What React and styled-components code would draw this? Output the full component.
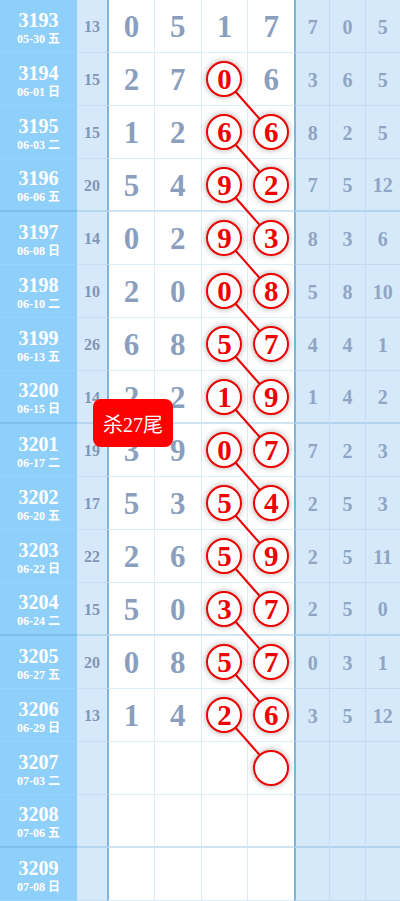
import React from 'react';
import styled, { createGlobalStyle } from 'styled-components';

const ROW_H = 53;
const COL3_X = 224.4;
const COL4_X = 271.1;

// issue, date, sum, four digits, circled index pair, three trailing stats
const ROWS = [
    { no: '3193', date: '05-30 五', sum: 13, digits: [0, 5, 1, 7], stats: [7, 0, 5] },
    { no: '3194', date: '06-01 日', sum: 15, digits: [2, 7, 0, 6], hit: [2], stats: [3, 6, 5] },
    { no: '3195', date: '06-03 二', sum: 15, digits: [1, 2, 6, 6], hit: [2, 3], stats: [8, 2, 5] },
    { no: '3196', date: '06-06 五', sum: 20, digits: [5, 4, 9, 2], hit: [2, 3], stats: [7, 5, 12] },
    { no: '3197', date: '06-08 日', sum: 14, digits: [0, 2, 9, 3], hit: [2, 3], stats: [8, 3, 6] },
    { no: '3198', date: '06-10 二', sum: 10, digits: [2, 0, 0, 8], hit: [2, 3], stats: [5, 8, 10] },
    { no: '3199', date: '06-13 五', sum: 26, digits: [6, 8, 5, 7], hit: [2, 3], stats: [4, 4, 1] },
    { no: '3200', date: '06-15 日', sum: 14, digits: [2, 2, 1, 9], hit: [2, 3], stats: [1, 4, 2] },
    { no: '3201', date: '06-17 二', sum: 19, digits: [3, 9, 0, 7], hit: [2, 3], stats: [7, 2, 3] },
    { no: '3202', date: '06-20 五', sum: 17, digits: [5, 3, 5, 4], hit: [2, 3], stats: [2, 5, 3] },
    { no: '3203', date: '06-22 日', sum: 22, digits: [2, 6, 5, 9], hit: [2, 3], stats: [2, 5, 11] },
    { no: '3204', date: '06-24 二', sum: 15, digits: [5, 0, 3, 7], hit: [2, 3], stats: [2, 5, 0] },
    { no: '3205', date: '06-27 五', sum: 20, digits: [0, 8, 5, 7], hit: [2, 3], stats: [0, 3, 1] },
    { no: '3206', date: '06-29 日', sum: 13, digits: [1, 4, 2, 6], hit: [2, 3], stats: [3, 5, 12] },
    { no: '3207', date: '07-03 二', digits: [null, null, null, ''], hit: [3] },
    { no: '3208', date: '07-06 五', digits: [null, null, null, null] },
    { no: '3209', date: '07-08 日', digits: [null, null, null, null] },
];

const GlobalStyle = createGlobalStyle`
  html, body {
    margin: 0;
    padding: 0;
    background: #ffffff;
  }
`;

export default function App() {
    const links = [];
    for (let r = 1; r <= 13; r++) {
        links.push({ x1: COL3_X, y1: r * ROW_H + 26, x2: COL4_X, y2: (r + 1) * ROW_H + 26 });
    }

    return (
        <Chart>
            <GlobalStyle />
            {ROWS.map((row, i) => {
                const thick = i % 4 === 3;
                return (
                    <Row key={row.no}>
                        <IssueCell $thick={thick}>
                            <IssueNo>{row.no}</IssueNo>
                            <IssueDate>{row.date}</IssueDate>
                        </IssueCell>
                        <SumCell $thick={thick}>{row.sum}</SumCell>
                        {row.digits.map((d, j) => (
                            <DigitCell key={j} $first={j === 0} $thick={thick}>
                                {row.hit && row.hit.includes(j)
                                    ? <Ball>{d}</Ball>
                                    : d}
                            </DigitCell>
                        ))}
                        {[0, 1, 2].map((j) => (
                            <StatCell key={j} $first={j === 0} $thick={thick}>
                                {row.stats ? row.stats[j] : ''}
                            </StatCell>
                        ))}
                    </Row>
                );
            })}

            <LinkLayer width="400" height="901" viewBox="0 0 400 901">
                {links.map((l, i) => (
                    <line key={i} {...l} stroke="#f00000" strokeWidth="2" />
                ))}
            </LinkLayer>

            <KillBadge>杀27尾</KillBadge>
        </Chart>
    );
}

const Chart = styled.div`
  position: relative;
  width: 400px;
  font-family: "Liberation Serif", "Times New Roman", serif;
`;

const Row = styled.div`
  display: grid;
  grid-template-columns: 77px 30px repeat(4, 46.75px) repeat(3, 1fr);
  height: ${ROW_H}px;
`;

const BaseCell = styled.div`
  box-sizing: border-box;
  display: flex;
  align-items: center;
  justify-content: center;
  font-weight: 700;
`;

const IssueCell = styled(BaseCell)`
  flex-direction: column;
  background: #8fd0fb;
  color: #ffffff;
  border-bottom: ${(p) => (p.$thick ? '2px solid #7cc0ee' : '1px solid #97d3fb')};
  padding-top: 3px;
`;

const IssueNo = styled.span`
  font-size: 20px;
  line-height: 22px;
`;

const IssueDate = styled.span`
  font-size: 12px;
  line-height: 16px;
  font-family: "Liberation Serif", "Noto Sans CJK SC", serif;
`;

const SumCell = styled(BaseCell)`
  background: #d6e9fa;
  color: #7f96b6;
  font-size: 16px;
  border-bottom: ${(p) => (p.$thick ? '2px solid #b6d6ef' : '1px solid #c6dff4')};
  padding-top: 2px;
`;

const DigitCell = styled(BaseCell)`
  background: #ffffff;
  color: #8a9fbe;
  font-size: 31px;
  border-left: ${(p) => (p.$first ? '2px solid #7fb4dc' : '1px solid #dbecf8')};
  border-bottom: ${(p) => (p.$thick ? '2px solid #cfe5f5' : '1px solid #dcedf8')};
  padding-top: 2px;
`;

const StatCell = styled(BaseCell)`
  background: #d6e9fa;
  color: #8fa5c4;
  font-size: 20px;
  border-left: ${(p) => (p.$first ? '2px solid #7fb4dc' : '1px solid #c2ddf2')};
  border-bottom: ${(p) => (p.$thick ? '2px solid #b3d4ee' : '1px solid #c2ddf2')};
  padding-top: 2px;
`;

const Ball = styled.span`
  position: relative;
  z-index: 2;
  box-sizing: border-box;
  width: 36px;
  height: 36px;
  border-radius: 50%;
  border: 2px solid #f00000;
  background: #ffffff;
  box-shadow: 0 0 6px rgba(0, 0, 0, 0.35);
  color: #f00000;
  font-size: 29px;
  line-height: 32px;
  text-align: center;
  margin-top: -2px;
`;

const LinkLayer = styled.svg`
  position: absolute;
  top: 0;
  left: 0;
  z-index: 1;
  pointer-events: none;
`;

const KillBadge = styled.div`
  position: absolute;
  left: 93px;
  top: 399px;
  z-index: 3;
  width: 80px;
  height: 48px;
  border-radius: 8px;
  background: #ff0000;
  color: #ffffff;
  font-family: "Liberation Serif", "Noto Sans CJK SC", serif;
  font-size: 20px;
  display: flex;
  align-items: center;
  justify-content: center;
`;
